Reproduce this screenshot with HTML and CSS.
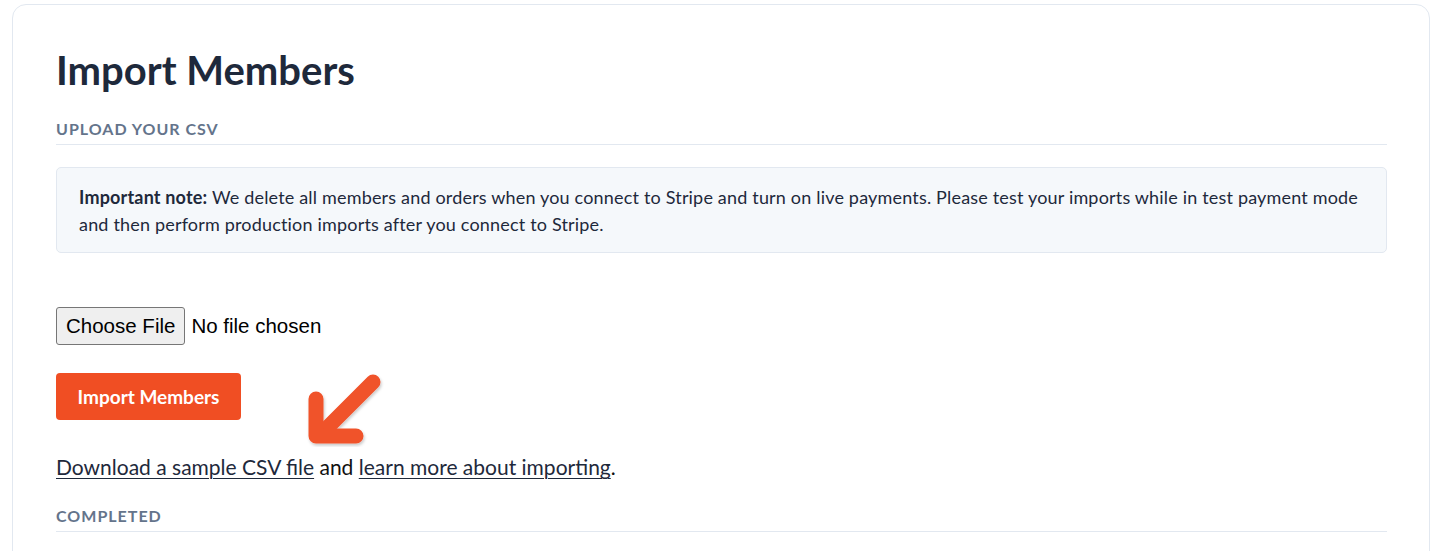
FILE: index.html
```html
<!DOCTYPE html>
<html lang="en">
<head>
<meta charset="utf-8">
<title>Import Members</title>
<link rel="stylesheet" href="styles.css">
</head>
<body>
<div class="card">
  <h1 class="title">Import Members</h1>
  <h2 class="section-heading">Upload your CSV</h2>
  <div class="notice">
    <strong>Important note:</strong> We delete all members and orders when you connect to Stripe and turn on live payments. Please test your imports while in test payment mode and then perform production imports after you connect to Stripe.
  </div>
  <div class="file-row">
    <input type="file" class="file-input">
  </div>
  <div class="action-row">
    <button class="primary-btn" type="button">Import Members</button>
    <svg class="arrow" width="90" height="90" viewBox="0 0 90 90" aria-hidden="true">
      <defs>
        <filter id="sh" x="-20%" y="-20%" width="140%" height="140%">
          <feDropShadow dx="1" dy="2" stdDeviation="1.5" flood-color="#000" flood-opacity="0.22"/>
        </filter>
      </defs>
      <g filter="url(#sh)" fill="none" stroke="#f0522a" stroke-width="15" stroke-linecap="round" stroke-linejoin="round">
        <path d="M72 18 L20 70"/>
        <path d="M15 35 L15 72 L55 72"/>
      </g>
    </svg>
  </div>
  <p class="links"><a href="#">Download a sample CSV file</a> and <a href="#">learn more about importing</a>.</p>
  <h2 class="section-heading completed">Completed</h2>
</div>
</body>
</html>
```

FILE: styles.css
```css
html, body {
  margin: 0;
  padding: 0;
  background: #ffffff;
}
body {
  padding: 4px 10px 0 12px;
  font-family: "Lato", "Liberation Sans", sans-serif;
  color: #1e293b;
}
.card {
  border: 1px solid #e2e8f0;
  border-radius: 14px;
  padding: 41px 42px 60px 43px;
  min-height: 600px;
}
.title {
  margin: 0;
  font-size: 40px;
  line-height: 48px;
  font-weight: 700;
  color: #1e293b;
}
.section-heading {
  margin: 26px 0 0;
  padding-bottom: 6px;
  border-bottom: 1px solid #e2e8f0;
  font-size: 16px;
  line-height: 18px;
  font-weight: 700;
  text-transform: uppercase;
  letter-spacing: 1px;
  color: #64748b;
}
.notice {
  margin-top: 22px;
  background: #f5f8fb;
  border: 1px solid #e2e8f0;
  border-radius: 5px;
  padding: 16px 18px 14px 22px;
  font-size: 18px;
  line-height: 27px;
  letter-spacing: 0.18px;
  color: #1e293b;
}
.notice strong {
  font-weight: 700;
}
.file-row {
  margin-top: 54px;
  height: 38px;
}
.file-input {
  font-family: "Liberation Sans", Arial, sans-serif;
  font-size: 20.5px;
  color: #000;
}
.file-input::file-selector-button {
  font-family: "Liberation Sans", Arial, sans-serif;
  font-size: 20.5px;
  height: 38px;
  padding: 0 9px;
  margin-right: 6px;
  background: #efefef;
  border: 1px solid #767676;
  border-radius: 3px;
  color: #000;
}
.action-row {
  margin-top: 28px;
  display: flex;
  align-items: flex-start;
  position: relative;
  height: 47px;
}
.primary-btn {
  width: 185px;
  height: 47px;
  background: #f04e23;
  border: none;
  border-radius: 4px;
  color: #ffffff;
  font-family: "Lato", "Liberation Sans", sans-serif;
  font-size: 19px;
  font-weight: 700;
}
.arrow {
  position: absolute;
  left: 245px;
  top: -9px;
}
.links {
  margin: 35px 0 0;
  font-size: 21px;
  line-height: 24px;
  color: #111;
}
.links a {
  color: #1e293b;
  text-decoration: underline;
  text-decoration-thickness: 1px;
  text-underline-offset: 3px;
}
.completed {
  margin-top: 28px;
}
```
